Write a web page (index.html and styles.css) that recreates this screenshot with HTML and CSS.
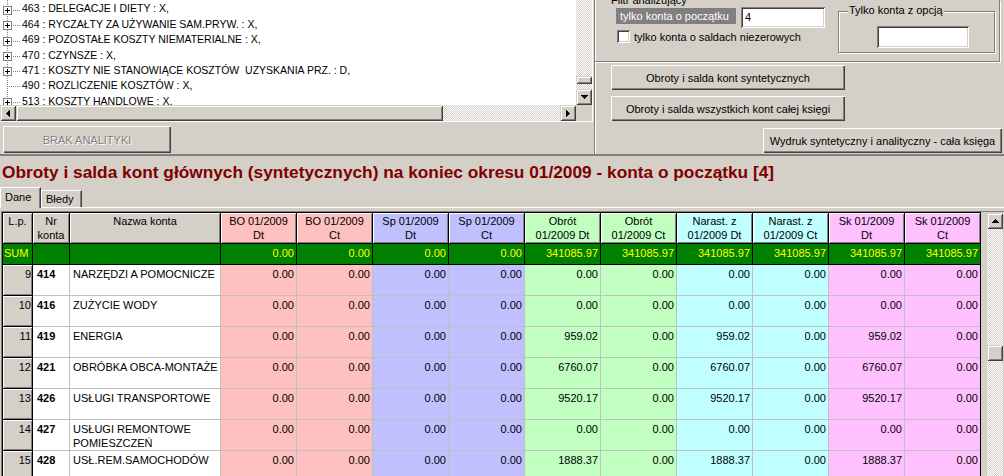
FILE: index.html
```html
<!DOCTYPE html>
<html lang="pl">
<head>
<meta charset="utf-8">
<title>Obroty i salda</title>
<link rel="stylesheet" href="styles.css">
</head>
<body>
<div class="top">
  <div class="left">
    <div class="treebox">
      <div class="treemain">
        <div class="tree">
          <svg class="gutter" width="22" height="105" viewBox="0 0 22 105" shape-rendering="crispEdges">
            <g stroke="#808080" stroke-width="1" stroke-dasharray="1 1" fill="none">
              <line x1="7.5" y1="0" x2="7.5" y2="105"/>
              <line x1="13" y1="10.5" x2="20" y2="10.5"/>
              <line x1="13" y1="25.5" x2="20" y2="25.5"/>
              <line x1="13" y1="41.5" x2="20" y2="41.5"/>
              <line x1="13" y1="56.5" x2="20" y2="56.5"/>
              <line x1="13" y1="71.5" x2="20" y2="71.5"/>
              <line x1="9" y1="86.5" x2="20" y2="86.5"/>
              <line x1="13" y1="102.5" x2="20" y2="102.5"/>
            </g>
            <g fill="#fff" stroke="#808080" stroke-width="1">
              <rect x="3.5" y="6.5" width="8" height="8"/>
              <rect x="3.5" y="21.5" width="8" height="8"/>
              <rect x="3.5" y="37.5" width="8" height="8"/>
              <rect x="3.5" y="52.5" width="8" height="8"/>
              <rect x="3.5" y="67.5" width="8" height="8"/>
              <rect x="3.5" y="98.5" width="8" height="8"/>
            </g>
            <path fill="#000" d="M5 10h5v1H5zM7 8h1v5H7zM5 25h5v1H5zM7 23h1v5H7zM5 41h5v1H5zM7 39h1v5H7zM5 56h5v1H5zM7 54h1v5H7zM5 71h5v1H5zM7 69h1v5H7zM5 102h5v1H5zM7 100h1v5H7z"/>
          </svg>
          <div class="tree-lines">
            <div class="tl">463 : DELEGACJE I DIETY : X,</div>
            <div class="tl">464 : RYCZAŁTY ZA UŻYWANIE SAM.PRYW. : X,</div>
            <div class="tl">469 : POZOSTAŁE KOSZTY NIEMATERIALNE : X,</div>
            <div class="tl">470 : CZYNSZE : X,</div>
            <div class="tl">471 : KOSZTY NIE STANOWIĄCE KOSZTÓW  UZYSKANIA PRZ. : D,</div>
            <div class="tl">490 : ROZLICZENIE KOSZTÓW : X,</div>
            <div class="tl">513 : KOSZTY HANDLOWE : X,</div>
          </div>
        </div>
        <div class="vs checker">
          <div class="vs-t1"></div>
          <div class="thumb vs-thumb"></div>
          <div class="vs-t2"></div>
          <div class="sbtn"><svg width="7" height="4" viewBox="0 0 7 4"><path d="M0 0h7v1H6v1H5v1H4v1H3V3H2V2H1V1H0z"/></svg></div>
        </div>
      </div>
      <div class="hs">
        <div class="sbtn"><svg width="4" height="7" viewBox="0 0 4 7"><path d="M3 0h1v7H3V6H2V5H1V4H0V3h1V2h1V1h1z"/></svg></div>
        <div class="thumb hs-thumb"></div>
        <div class="hs-trk checker"></div>
        <div class="sbtn"><svg width="4" height="7" viewBox="0 0 4 7"><path d="M0 0h1v1h1v1h1v1h1v1H3v1H2v1H1v1H0z"/></svg></div>
        <div class="corner"></div>
      </div>
    </div>
    <div class="left-foot"><div class="btn btn-disabled">BRAK ANALITYKI</div></div>
  </div>
  <div class="right">
    <div class="filter">
      <div class="filter-left">
        <div class="legend-cut">Filtr analizujący</div>
        <div class="row1"><div class="lbl">tylko konta o początku</div><div class="inp inp-pre">4</div></div>
        <div class="row2"><div class="cb"></div><span>tylko konta o saldach niezerowych</span></div>
      </div>
      <div class="optgroup"><span class="og-legend">Tylko konta z opcją</span><div class="inp og-inp"></div></div>
    </div>
    <div class="actions">
      <div class="btn btn-a">Obroty i salda kont syntetycznych</div>
      <div class="btn btn-b">Obroty i salda wszystkich kont całej księgi</div>
      <div class="btn btn-c">Wydruk syntetyczny i analityczny - cała księga</div>
    </div>
  </div>
</div>

<div class="title">Obroty i salda kont głównych (syntetycznych) na koniec okresu 01/2009 - konta o początku [4]</div>

<div class="tabs">
  <div class="tab tab-on">Dane</div>
  <div class="tab tab-off">Błedy</div>
</div>

<div class="panel">
  <div class="gwrap">
    <div class="grid">
      <div class="ghead">
        <div class="c h">L.p.</div>
        <div class="c h">Nr<br>konta</div>
        <div class="c h">Nazwa konta</div>
        <div class="c h bo">BO 01/2009<br>Dt</div>
        <div class="c h bo">BO 01/2009<br>Ct</div>
        <div class="c h sp">Sp 01/2009<br>Dt</div>
        <div class="c h sp">Sp 01/2009<br>Ct</div>
        <div class="c h ob">Obrót<br>01/2009 Dt</div>
        <div class="c h ob">Obrót<br>01/2009 Ct</div>
        <div class="c h na">Narast. z<br>01/2009 Dt</div>
        <div class="c h na">Narast. z<br>01/2009 Ct</div>
        <div class="c h sk">Sk 01/2009<br>Dt</div>
        <div class="c h sk">Sk 01/2009<br>Ct</div>

        <div class="c s sum-lp">SUM</div>
        <div class="c s"></div>
        <div class="c s"></div>
        <div class="c s n">0.00</div>
        <div class="c s n">0.00</div>
        <div class="c s n">0.00</div>
        <div class="c s n">0.00</div>
        <div class="c s n">341085.97</div>
        <div class="c s n">341085.97</div>
        <div class="c s n">341085.97</div>
        <div class="c s n">341085.97</div>
        <div class="c s n">341085.97</div>
        <div class="c s n">341085.97</div>
      </div>
      <div class="gbody">
        <div class="c lp">9</div><div class="c nr">414</div><div class="c nm">NARZĘDZI A POMOCNICZE</div>
        <div class="c n bo">0.00</div><div class="c n bo">0.00</div><div class="c n sp">0.00</div><div class="c n sp">0.00</div>
        <div class="c n ob">0.00</div><div class="c n ob">0.00</div><div class="c n na">0.00</div><div class="c n na">0.00</div>
        <div class="c n sk">0.00</div><div class="c n sk">0.00</div>

        <div class="c lp">10</div><div class="c nr">416</div><div class="c nm">ZUŻYCIE WODY</div>
        <div class="c n bo">0.00</div><div class="c n bo">0.00</div><div class="c n sp">0.00</div><div class="c n sp">0.00</div>
        <div class="c n ob">0.00</div><div class="c n ob">0.00</div><div class="c n na">0.00</div><div class="c n na">0.00</div>
        <div class="c n sk">0.00</div><div class="c n sk">0.00</div>

        <div class="c lp">11</div><div class="c nr">419</div><div class="c nm">ENERGIA</div>
        <div class="c n bo">0.00</div><div class="c n bo">0.00</div><div class="c n sp">0.00</div><div class="c n sp">0.00</div>
        <div class="c n ob">959.02</div><div class="c n ob">0.00</div><div class="c n na">959.02</div><div class="c n na">0.00</div>
        <div class="c n sk">959.02</div><div class="c n sk">0.00</div>

        <div class="c lp">12</div><div class="c nr">421</div><div class="c nm">OBRÓBKA OBCA-MONTAŻE</div>
        <div class="c n bo">0.00</div><div class="c n bo">0.00</div><div class="c n sp">0.00</div><div class="c n sp">0.00</div>
        <div class="c n ob">6760.07</div><div class="c n ob">0.00</div><div class="c n na">6760.07</div><div class="c n na">0.00</div>
        <div class="c n sk">6760.07</div><div class="c n sk">0.00</div>

        <div class="c lp">13</div><div class="c nr">426</div><div class="c nm">USŁUGI TRANSPORTOWE</div>
        <div class="c n bo">0.00</div><div class="c n bo">0.00</div><div class="c n sp">0.00</div><div class="c n sp">0.00</div>
        <div class="c n ob">9520.17</div><div class="c n ob">0.00</div><div class="c n na">9520.17</div><div class="c n na">0.00</div>
        <div class="c n sk">9520.17</div><div class="c n sk">0.00</div>

        <div class="c lp">14</div><div class="c nr">427</div><div class="c nm">USŁUGI REMONTOWE POMIESZCZEŃ</div>
        <div class="c n bo">0.00</div><div class="c n bo">0.00</div><div class="c n sp">0.00</div><div class="c n sp">0.00</div>
        <div class="c n ob">0.00</div><div class="c n ob">0.00</div><div class="c n na">0.00</div><div class="c n na">0.00</div>
        <div class="c n sk">0.00</div><div class="c n sk">0.00</div>

        <div class="c lp">15</div><div class="c nr">428</div><div class="c nm">USŁ.REM.SAMOCHODÓW</div>
        <div class="c n bo">0.00</div><div class="c n bo">0.00</div><div class="c n sp">0.00</div><div class="c n sp">0.00</div>
        <div class="c n ob">1888.37</div><div class="c n ob">0.00</div><div class="c n na">1888.37</div><div class="c n na">0.00</div>
        <div class="c n sk">1888.37</div><div class="c n sk">0.00</div>
      </div>
    </div>
    <div class="vsb checker">
      <div class="sbtn"><svg width="7" height="4" viewBox="0 0 7 4"><path d="M3 0h1v1h1v1h1v1h1v1H0V3h1V2h1V1h1z"/></svg></div>
      <div class="vsb-t1"></div>
      <div class="thumb vsb-thumb"></div>
    </div>
  </div>
</div>
</body>
</html>
```
FILE: styles.css
```css
html, body {
  margin: 0;
  padding: 0;
}
body {
  width: 1004px;
  height: 476px;
  overflow: hidden;
  background: #d4d0c8;
  font-family: "Liberation Sans", Arial, sans-serif;
  font-size: 11px;
  color: #000;
}

.checker {
  background-color: #fff;
  background-image: repeating-conic-gradient(#d4d0c8 0 25%, #fff 0 50%);
  background-size: 2px 2px;
}

.thumb,
.sbtn {
  background-color: #d4d0c8;
  box-shadow: inset 1px 1px #d4d0c8, inset -1px -1px #404040, inset 2px 2px #fff, inset -2px -2px #808080;
}
.sbtn {
  width: 16px;
  height: 16px;
  flex: none;
  display: flex;
  align-items: center;
  justify-content: center;
}
.sbtn svg {
  display: block;
  fill: #000;
}

/* ---------- top area ---------- */
.top {
  display: flex;
  height: 154px;
  border-bottom: 2px solid #808080;
}
.left {
  width: 594px;
  flex: none;
  display: flex;
  flex-direction: column;
}
.treebox {
  width: 593px;
  height: 122px;
  box-sizing: border-box;
  border-right: 1px solid #fff;
  border-bottom: 1px solid #fff;
  display: flex;
  flex-direction: column;
}
.treemain {
  display: flex;
  height: 105px;
}
.tree {
  width: 576px;
  flex: none;
  background: #fff;
  display: flex;
  overflow: hidden;
}
.gutter {
  display: block;
  flex: none;
}
.tree-lines {
  padding-top: 1.4px;
  font-size: 10.5px;
  line-height: 15.4px;
}
.tl {
  white-space: pre;
}
.vs {
  width: 16px;
  flex: none;
  display: flex;
  flex-direction: column;
}
.vs-t1 { height: 76px; }
.vs-thumb { height: 8px; }
.vs-t2 { height: 5px; }

.hs {
  display: flex;
  height: 16px;
}
.hs-thumb { width: 427px; }
.hs-trk { width: 117px; }
.corner {
  width: 16px;
  background: #d4d0c8;
}
.left-foot {
  padding: 4px 0 0 3px;
}

.btn {
  display: flex;
  align-items: center;
  justify-content: center;
  box-sizing: border-box;
  background: #d4d0c8;
  box-shadow: inset 1px 1px #fff, inset -1px -1px #404040, inset -2px -2px #808080;
  white-space: nowrap;
}
.btn-disabled {
  width: 168px;
  height: 27px;
  color: #808080;
  text-shadow: 1px 1px 0 #fff;
}

.right {
  flex: 1;
  min-width: 0;
  border-left: 1px solid #808080;
  box-shadow: inset 1px 0 #fff;
  display: flex;
  flex-direction: column;
}
.filter {
  width: 405px;
  height: 62px;
  flex: none;
  box-sizing: border-box;
  border-right: 1px solid #808080;
  border-bottom: 1px solid #808080;
  box-shadow: 1px 1px 0 #fff;
  display: flex;
}
.filter-left {
  width: 243px;
  flex: none;
  box-sizing: border-box;
  padding-left: 21px;
  display: flex;
  flex-direction: column;
}
.legend-cut {
  margin: -6px 0 0 -5px;
  height: 13px;
  line-height: 13px;
  white-space: nowrap;
}
.row1 {
  display: flex;
  height: 21px;
}
.lbl {
  margin-top: 1px;
  width: 120px;
  height: 16px;
  box-sizing: border-box;
  padding-left: 4px;
  line-height: 16px;
  background: #808080;
  color: #fff;
  white-space: nowrap;
}
.inp {
  background: #fff;
  box-sizing: border-box;
  box-shadow: inset 1px 1px #808080, inset -1px -1px #fff, inset 2px 2px #404040, inset -2px -2px #d4d0c8;
}
.inp-pre {
  margin-left: 5px;
  width: 84px;
  height: 21px;
  padding: 3px 0 0 4px;
  line-height: 14px;
}
.row2 {
  display: flex;
  align-items: center;
  gap: 4px;
  margin-top: 2px;
  height: 13px;
  white-space: nowrap;
}
.cb {
  width: 13px;
  height: 13px;
  flex: none;
  margin-left: 1px;
  background: #fff;
  box-shadow: inset 1px 1px #808080, inset -1px -1px #fff, inset 2px 2px #404040, inset -2px -2px #d4d0c8;
}
.optgroup {
  position: relative;
  margin-top: 11px;
  width: 157px;
  height: 42px;
  flex: none;
  box-sizing: border-box;
  border: 1px solid #808080;
  box-shadow: inset 1px 1px #fff, 1px 1px 0 #fff;
}
.og-legend {
  position: absolute;
  left: 9px;
  top: -8px;
  padding: 0 1px;
  background: #d4d0c8;
  line-height: 13px;
  white-space: nowrap;
}
.og-inp {
  margin: 14px 0 0 38px;
  width: 92px;
  height: 22px;
}
.actions {
  display: flex;
  flex-direction: column;
  align-items: flex-start;
  padding-left: 16px;
}
.btn-a {
  margin-top: 3px;
  width: 234px;
  height: 25px;
}
.btn-b {
  margin-top: 6px;
  width: 234px;
  height: 25px;
}
.btn-c {
  margin-top: 7px;
  margin-right: 2px;
  align-self: flex-end;
  width: 239px;
  height: 25px;
}

/* ---------- title & tabs ---------- */
.title {
  padding: 6px 0 4px 2px;
  font-weight: bold;
  font-size: 17.3px;
  line-height: 20px;
  color: #800000;
  white-space: nowrap;
}
.tabs {
  display: flex;
  align-items: flex-end;
  height: 21px;
}
.tab {
  box-sizing: border-box;
  width: 41px;
  background: #d4d0c8;
  border-top: 1px solid #fff;
  border-left: 1px solid #fff;
  border-right: 1px solid #404040;
  box-shadow: inset -1px 0 #808080;
  line-height: 13px;
  white-space: nowrap;
}
.tab-on {
  position: relative;
  z-index: 1;
  height: 21px;
  margin-bottom: -1px;
  padding: 3px 0 0 4px;
}
.tab-off {
  height: 17px;
  padding: 2px 0 0 4px;
}
.panel {
  border-top: 1px solid #fff;
  padding-top: 3px;
}

/* ---------- grid ---------- */
.gwrap {
  display: flex;
  margin-left: 1px;
  border-top: 1px solid #808080;
  border-left: 1px solid #808080;
}
.grid {
  width: 979px;
  flex: none;
  box-sizing: border-box;
  border: 1px solid #000;
  border-bottom: 0;
}
.ghead,
.gbody {
  display: grid;
  grid-template-columns: 29px 36px 150px repeat(10, 75px);
  gap: 1px;
}
.ghead {
  grid-template-rows: 30px 20px;
  background: #000;
  padding-bottom: 1px;
}
.gbody {
  grid-auto-rows: 30px;
  background: linear-gradient(to right, #000 0 30px, #c0c0c0 30px 100%);
}
.c {
  padding: 2px 2px 0 2px;
  line-height: 14px;
  white-space: nowrap;
  overflow: hidden;
}
.h {
  background-color: #d4d0c8;
  text-align: center;
  padding: 1px 1px 0;
  box-shadow: inset 1px 1px #fff, inset -1px -1px #808080;
}
.bo { background-color: #ffc0c0; }
.sp { background-color: #c0c0ff; }
.ob { background-color: #c0ffc0; }
.na { background-color: #c0ffff; }
.sk { background-color: #ffc0ff; }
.s {
  background-color: #008000;
  color: #ffff00;
}
.sum-lp { padding-left: 1px; }
.n { text-align: right; }
.lp {
  background: #d4d0c8;
  text-align: right;
  padding-right: 1px;
  box-shadow: inset 1px 1px #fff, inset -1px -1px #808080;
}
.nr {
  background: #fff;
  font-weight: bold;
  padding-left: 4px;
}
.nm {
  background: #fff;
  padding-left: 3px;
  white-space: normal;
}

.vsb {
  margin: 1px 0 0 6px;
  width: 16px;
  height: 263px;
  flex: none;
  display: flex;
  flex-direction: column;
}
.vsb-t1 { height: 116px; }
.vsb-thumb { height: 16px; }
```
